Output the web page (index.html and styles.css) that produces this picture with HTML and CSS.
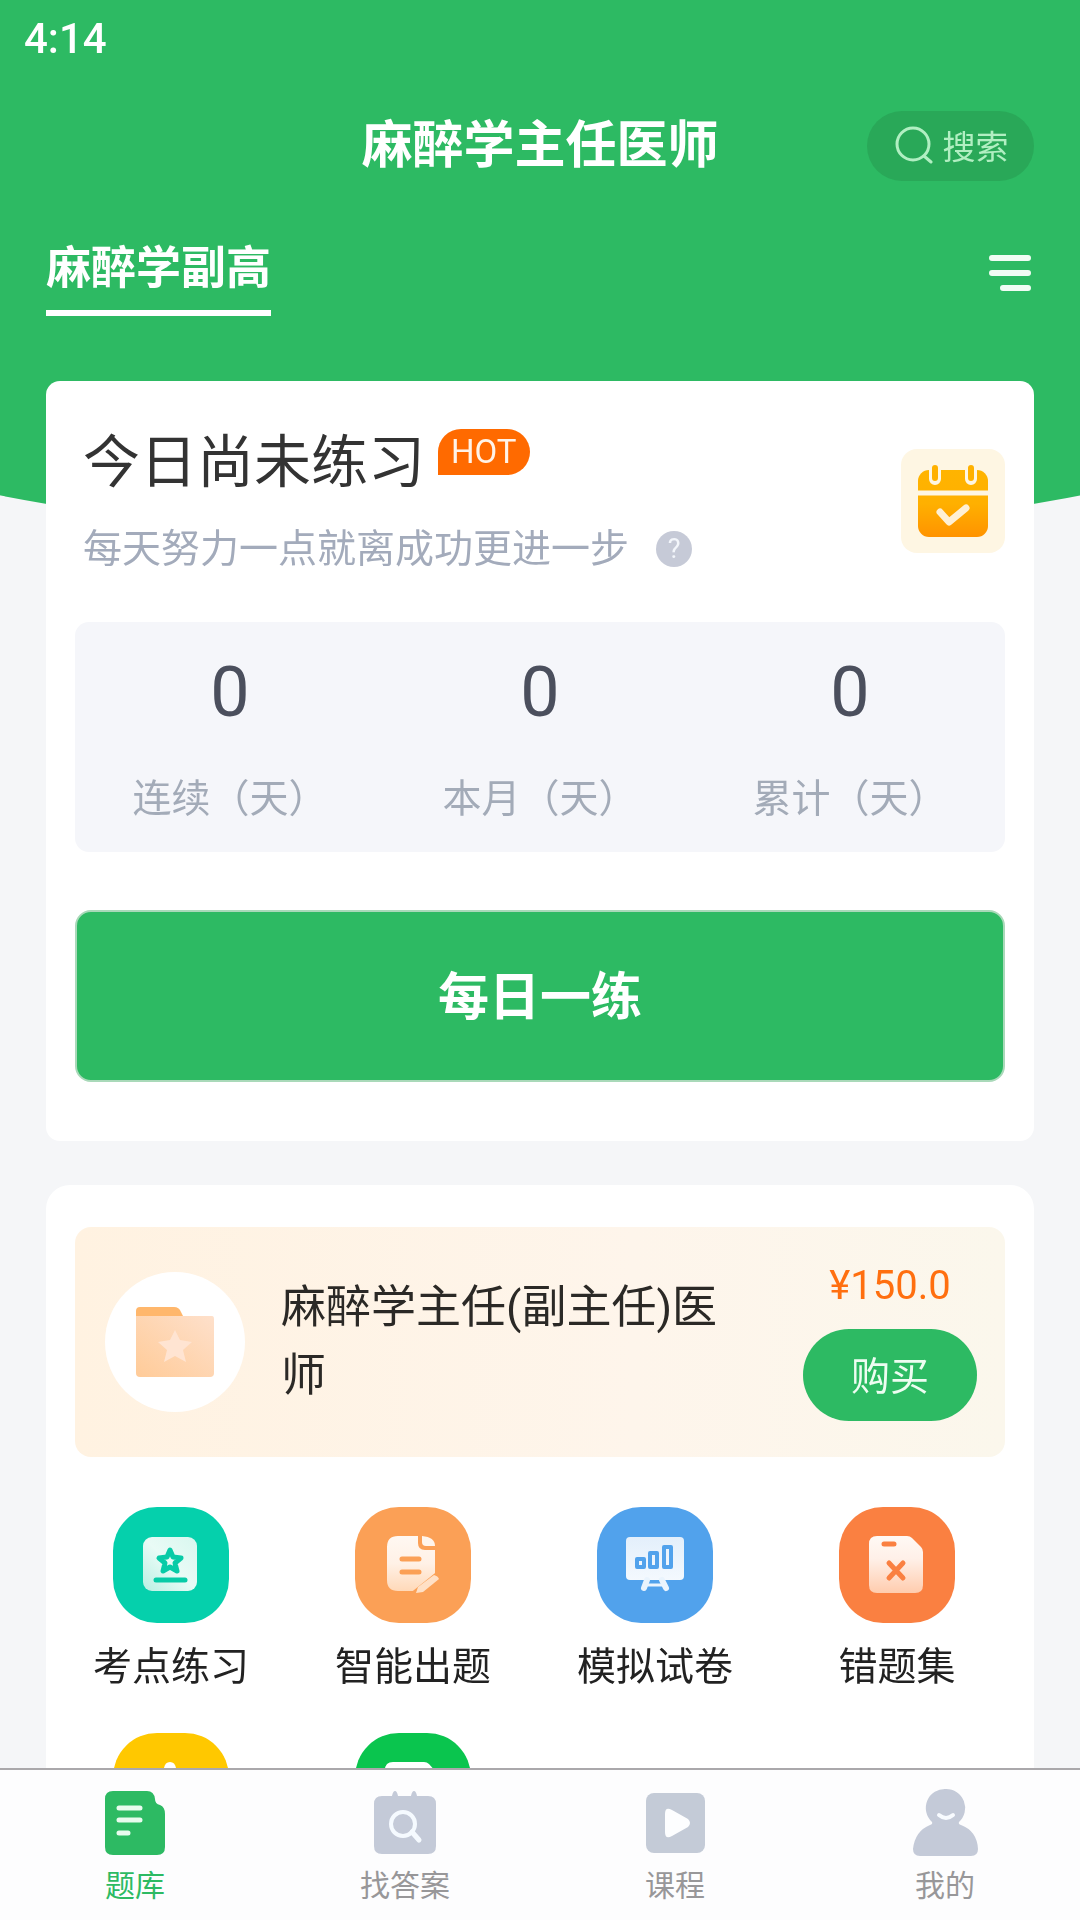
FILE: index.html
```html
<!DOCTYPE html>
<html lang="zh-CN">
<head>
<meta charset="utf-8">
<meta name="viewport" content="width=device-width, initial-scale=1">
<title>麻醉学主任医师</title>
<link rel="stylesheet" href="styles.css">
</head>
<body>
<div class="app">
  <main class="content">
    <header class="header">
      <div class="status">4:14</div>
      <div class="title-row">
        <h1 class="title">麻醉学主任医师</h1>
        <button class="search" type="button">
          <svg width="38" height="38" viewBox="0 0 38 38" fill="none" stroke="currentColor" stroke-width="3" stroke-linecap="round"><circle cx="18" cy="18" r="16"/><path d="M29 30l7 6"/></svg>
          <span>搜索</span>
        </button>
      </div>
      <div class="tab-row">
        <a class="tab" href="#">麻醉学副高</a>
        <button class="menu" type="button" aria-label="菜单">
          <svg width="42" height="38" viewBox="0 0 42 38" fill="none" stroke="#f1fcf4" stroke-width="6" stroke-linecap="round"><path d="M3 4h36M3 19h36M14 34h25"/></svg>
        </button>
      </div>
    </header>

    <section class="card daily">
      <div class="daily-head">
        <div class="daily-text">
          <div class="daily-title"><h2>今日尚未练习</h2><span class="hot">HOT</span></div>
          <div class="daily-sub"><p>每天努力一点就离成功更进一步</p><button class="help" type="button">?</button></div>
        </div>
        <button class="calendar" type="button" aria-label="日历">
          <svg width="72" height="74" viewBox="0 0 72 74">
            <defs><linearGradient id="cal" x1="0" y1="0" x2="0" y2="1"><stop offset="0" stop-color="#ffb400"/><stop offset=".5" stop-color="#ffb000"/><stop offset="1" stop-color="#ff9300"/></linearGradient></defs>
            <rect x="1" y="6" width="70" height="67" rx="11" fill="url(#cal)"/>
            <path d="M0 29h72" stroke="#fef6e3" stroke-width="5"/>
            <path d="M18 4v11M54 4v11" stroke="#fef6e3" stroke-width="12" stroke-linecap="round"/>
            <path d="M18 4v10M54 4v10" stroke="#ffb100" stroke-width="6" stroke-linecap="round"/>
            <path d="M23 48l9 10 17-14" fill="none" stroke="#fff0d4" stroke-width="7" stroke-linecap="round" stroke-linejoin="round"/>
          </svg>
        </button>
      </div>
      <dl class="stats">
        <div class="stat"><dd>0</dd><dt>连续（天）</dt></div>
        <div class="stat"><dd>0</dd><dt>本月（天）</dt></div>
        <div class="stat"><dd>0</dd><dt>累计（天）</dt></div>
      </dl>
      <button class="practice" type="button">每日一练</button>
    </section>

    <section class="card bank">
      <div class="promo">
        <span class="folder">
          <svg width="80" height="72" viewBox="0 0 80 72">
            <defs><linearGradient id="fold" x1="0" y1="1" x2="1" y2="0"><stop offset="0" stop-color="#ffcb98"/><stop offset="1" stop-color="#fee0cb"/></linearGradient></defs>
            <path d="M1 14V5q0-4 4-4h34q5 0 7 5l4 8z" fill="#ffb76c"/>
            <path d="M1 10h76q2 0 2 3v54q0 4-4 4H5q-4 0-4-4z" fill="url(#fold)"/>
            <path d="M40 24l5 10 12 2-9 8 3 12-11-6-11 6 3-12-9-8 12-2z" fill="#ffe4d2"/>
          </svg>
        </span>
        <h3 class="promo-title">麻醉学主任(副主任)医师</h3>
        <div class="buy-box">
          <span class="price">¥150.0</span>
          <button class="buy" type="button">购买</button>
        </div>
      </div>
      <nav class="grid">
        <a class="item" href="#">
          <svg class="tile teal" viewBox="0 0 116 116">
            <defs><linearGradient id="g1" x1="0" y1="1" x2="1" y2="0"><stop offset="0" stop-color="#b9f0e3"/><stop offset=".5" stop-color="#e9fbf6"/><stop offset="1" stop-color="#d8f7ef"/></linearGradient></defs>
            <rect x="30" y="30" width="54" height="54" rx="9" fill="url(#g1)"/>
            <path d="M57 43l3 7 8 1-6 5 2 8-7-4-7 4 2-8-6-5 8-1z" fill="none" stroke="#08cba7" stroke-width="5" stroke-linejoin="round"/>
            <path d="M43 73h29" stroke="#08cba7" stroke-width="5" stroke-linecap="round"/>
          </svg>
          <span>考点练习</span>
        </a>
        <a class="item" href="#">
          <svg class="tile orange" viewBox="0 0 116 116">
            <defs><linearGradient id="g2" x1="0" y1="0" x2="0" y2="1"><stop offset="0" stop-color="#fff8f2"/><stop offset=".5" stop-color="#fff1e6"/><stop offset="1" stop-color="#ffd9b9"/></linearGradient></defs>
            <path d="M43 29h20v7q0 7 7 7h10v24L61 84H43q-11 0-11-11V40q0-11 11-11z" fill="url(#g2)"/>
            <path d="M67 29q13 1 13 10h-9q-4 0-4-4z" fill="#fff5ec"/>
            <path d="M47 52h17M47 65h17" stroke="#fba056" stroke-width="5" stroke-linecap="round"/>
            <path d="M56 88l26-21" stroke="#fba056" stroke-width="4"/>
            <path d="M61 86l2-6 16-12q4 1 5 4L68 85z" fill="#ffe0c6"/>
          </svg>
          <span>智能出题</span>
        </a>
        <a class="item" href="#">
          <svg class="tile blue" viewBox="0 0 116 116">
            <defs><linearGradient id="g3" x1="0" y1="0" x2="0" y2="1"><stop offset="0" stop-color="#e3effb"/><stop offset="1" stop-color="#f4f9fe"/></linearGradient></defs>
            <rect x="29" y="30" width="58" height="43" rx="4" fill="url(#g3)"/>
            <path d="M50 73l-3 8M65 73l4 8" stroke="#eaf4fd" stroke-width="6" stroke-linecap="round"/>
            <path d="M50 78h16" stroke="#eaf4fd" stroke-width="3"/>
            <path d="M40 52h7v8h-7zM53 46h7v14h-7zM67 40h7v20h-7z" fill="none" stroke="#51a2ec" stroke-width="4" stroke-linejoin="round"/>
          </svg>
          <span>模拟试卷</span>
        </a>
        <a class="item" href="#">
          <svg class="tile coral" viewBox="0 0 116 116">
            <defs><linearGradient id="g4" x1="0" y1="0" x2="0" y2="1"><stop offset="0" stop-color="#fff9f5"/><stop offset=".4" stop-color="#fff0e8"/><stop offset="1" stop-color="#ffccae"/></linearGradient></defs>
            <path d="M38 29h30q3 0 5 2l9 9q2 2 2 5v33q0 8-8 8H38q-8 0-8-8V37q0-8 8-8z" fill="url(#g4)"/>
            <path d="M45 37h10M50 56l14 15M64 56L50 71" stroke="#fa8041" stroke-width="5" stroke-linecap="round"/>
          </svg>
          <span>错题集</span>
        </a>
        <a class="item" href="#">
          <svg class="tile yellow" viewBox="0 0 116 116"><path d="M57 29q5 0 6 6l3 11 14 2-10 11 3 16-16-7-16 7 3-16-10-11 14-2 3-11q1-6 6-6z" fill="#fff"/></svg>
        </a>
        <a class="item" href="#">
          <svg class="tile green" viewBox="0 0 116 116"><path d="M38 29h31q3 0 5 2l8 9q2 2 2 5v33q0 8-8 8H38q-8 0-8-8V37q0-8 8-8z" fill="#fff"/></svg>
        </a>
      </nav>
    </section>
  </main>

  <nav class="tabbar">
    <a class="nav active" href="#">
      <svg width="72" height="72" viewBox="0 0 72 72">
        <path d="M14 4h34q7 0 8 8 0 5 5 6 5 2 5 9v33q0 8-8 8H14q-8 0-8-8V12q0-8 8-8z" fill="#2dba63"/>
        <path d="M20 21h21M20 33h21M20 46h9" stroke="#e8fbee" stroke-width="5" stroke-linecap="round"/>
      </svg>
      <span>题库</span>
    </a>
    <a class="nav" href="#">
      <svg width="72" height="72" viewBox="0 0 72 72">
        <path d="M13 9h10q1-5 3-5t3 5h13q1-5 3-5t3 5h11q8 0 8 8v42q0 8-8 8H13q-8 0-8-8V17q0-8 8-8z" fill="#c4cad8"/>
        <circle cx="34" cy="37" r="12" fill="none" stroke="#f5faff" stroke-width="4"/>
        <path d="M43 45l7 8" stroke="#f5faff" stroke-width="5" stroke-linecap="round"/>
      </svg>
      <span>找答案</span>
    </a>
    <a class="nav" href="#">
      <svg width="72" height="72" viewBox="0 0 72 72">
        <rect x="7" y="6" width="59" height="60" rx="8" fill="#c4cbd7"/>
        <path d="M26 27q0-8 7-4l16 9q4 4 0 8l-16 9q-7 4-7-4z" fill="#fdfeff"/>
      </svg>
      <span>课程</span>
    </a>
    <a class="nav" href="#">
      <svg width="72" height="72" viewBox="0 0 72 72">
        <path d="M37 2a19 19 0 0 1 13 33q-1 2 2 3 16 6 17 24 0 7-7 7H11q-7 0-7-7 2-18 17-24 3-1 2-3A19 19 0 0 1 37 2z" fill="#c4cad8"/>
        <path d="M30 28q7 6 14 0" fill="none" stroke="#f8fbff" stroke-width="4" stroke-linecap="round"/>
      </svg>
      <span>我的</span>
    </a>
  </nav>
</div>
</body>
</html>
```

FILE: styles.css
```css
* { box-sizing: border-box; }

body, h1, h2, h3, p, dl, dd, dt { margin: 0; font-weight: 400; }

body {
  font-family: Roboto, "Noto Sans CJK SC", sans-serif;
  background: #f5f6f8;
  color: #333;
}

button { padding: 0; border: 0; background: none; font: inherit; color: inherit; cursor: pointer; }
a { color: inherit; text-decoration: none; }
svg { display: block; flex: none; }

.app { display: flex; flex-direction: column; height: 100vh; }

.content {
  position: relative;
  flex: 1;
  min-height: 0;
  overflow-y: auto;
  scrollbar-width: none;
}

/* curved green backdrop behind the header and the first card */
.content::before {
  content: "";
  position: absolute;
  inset: 0 0 auto;
  height: 560px;
  z-index: -1;
  background: #2dba63;
  clip-path: ellipse(120% 545px at 50% 0);
}

.header { height: 381px; padding: 14px 46px 0; color: #fff; }
.status { margin-left: -22px; font-size: 42px; font-weight: 500; line-height: 50px; }

.title-row {
  display: grid;
  grid-template-columns: 1fr auto 1fr;
  align-items: center;
  margin-top: 46px;
}
.title { grid-column: 2; font-size: 51px; font-weight: 700; line-height: 72px; }
.search {
  justify-self: end;
  display: flex;
  align-items: center;
  justify-content: center;
  gap: 10px;
  width: 167px;
  height: 70px;
  padding: 0 0 2px 2px;
  border-radius: 35px;
  background: #29a858;
  color: #b1efc2;
  font-size: 33px;
}

.tab-row { display: flex; justify-content: space-between; align-items: center; margin-top: 54px; }
.tab { border-bottom: 6px solid #fff; font-size: 45px; font-weight: 700; line-height: 66px; padding-bottom: 8px; }
.menu { padding: 0 3px 6px; }

.card { margin: 0 46px; background: #fff; }
.daily { padding: 46px 29px 59px; border-radius: 14px; }

.daily-head { display: flex; justify-content: space-between; align-items: center; margin-bottom: 48px; }
.daily-text { padding-left: 8px; }
.daily-title { display: flex; align-items: flex-start; gap: 13px; }
.daily-title h2 { font-size: 57px; line-height: 72px; }
.hot {
  margin-top: 2px;
  padding: 0 13px;
  border-radius: 23px 23px 23px 0;
  background: #ff6a00;
  color: #fff3e8;
  font-size: 33px;
  line-height: 46px;
}
.daily-sub { display: flex; align-items: center; gap: 27px; margin-top: 25px; color: #a3abbb; font-size: 39px; line-height: 50px; }
.help { width: 36px; height: 36px; border-radius: 50%; background: #c6cad7; color: #f3f6fb; font-size: 27px; line-height: 36px; }
.calendar {
  display: grid;
  place-items: center;
  width: 104px;
  height: 104px;
  border-radius: 16px;
  background: #fef6e3;
}

.stats { display: grid; grid-template-columns: repeat(3, 1fr); padding: 31px 0 27px; border-radius: 14px; background: #f5f6fa; text-align: center; }
.stat dd { color: #4b4f5d; font-size: 70px; line-height: 78px; }
.stat dt { margin-top: 42px; color: #a3abb8; font-size: 39px; line-height: 52px; }

.practice {
  display: block;
  width: 100%;
  height: 172px;
  margin-top: 58px;
  padding-bottom: 6px;
  border: 2px solid #a9d9b9;
  border-radius: 16px;
  background: #2dba63;
  color: #fff;
  font-size: 51px;
  font-weight: 700;
}

.bank { margin-top: 44px; padding-top: 42px; border-radius: 24px 24px 0 0; }
.promo {
  display: flex;
  align-items: center;
  height: 230px;
  margin: 0 29px;
  padding: 0 28px 0 30px;
  border-radius: 16px;
  background: linear-gradient(90deg, #fff2e1, #fef5eb 60%, #fbf7ec);
}
.folder { display: grid; place-items: center; flex: none; width: 140px; height: 140px; border-radius: 50%; background: #fff; }
.promo-title { flex: 1; margin: 0 60px 0 36px; color: #2b2926; font-size: 45px; line-height: 68px; }
.buy-box { display: flex; flex-direction: column; align-items: center; gap: 20px; }
.price { color: #ff6f0f; font-size: 40px; line-height: 46px; }
.buy { width: 174px; height: 92px; padding-bottom: 4px; border-radius: 46px; background: #2dba63; color: #edfdf1; font-size: 39px; }

.grid { display: grid; grid-template-columns: repeat(4, 1fr); gap: 38px 0; padding: 50px 16px 40px 4px; }
.item { display: flex; flex-direction: column; align-items: center; gap: 16px; color: #222; font-size: 39px; line-height: 56px; }
.tile { width: 116px; height: 116px; border-radius: 44px; }
.teal { background: #05d0ac; }
.orange { background: #fba056; }
.blue { background: #51a2ec; }
.coral { background: #fa8041; }
.yellow { background: #ffc800; }
.green { background: #0ac54e; }

.tabbar { display: grid; grid-template-columns: repeat(4, 1fr); height: 152px; border-top: 2px solid #aaa8ab; background: #fdfdfe; }
.nav { display: flex; flex-direction: column; align-items: center; padding-top: 17px; gap: 6px; color: #989799; font-size: 30px; line-height: 42px; }
.active { color: #2dba63; }
```
